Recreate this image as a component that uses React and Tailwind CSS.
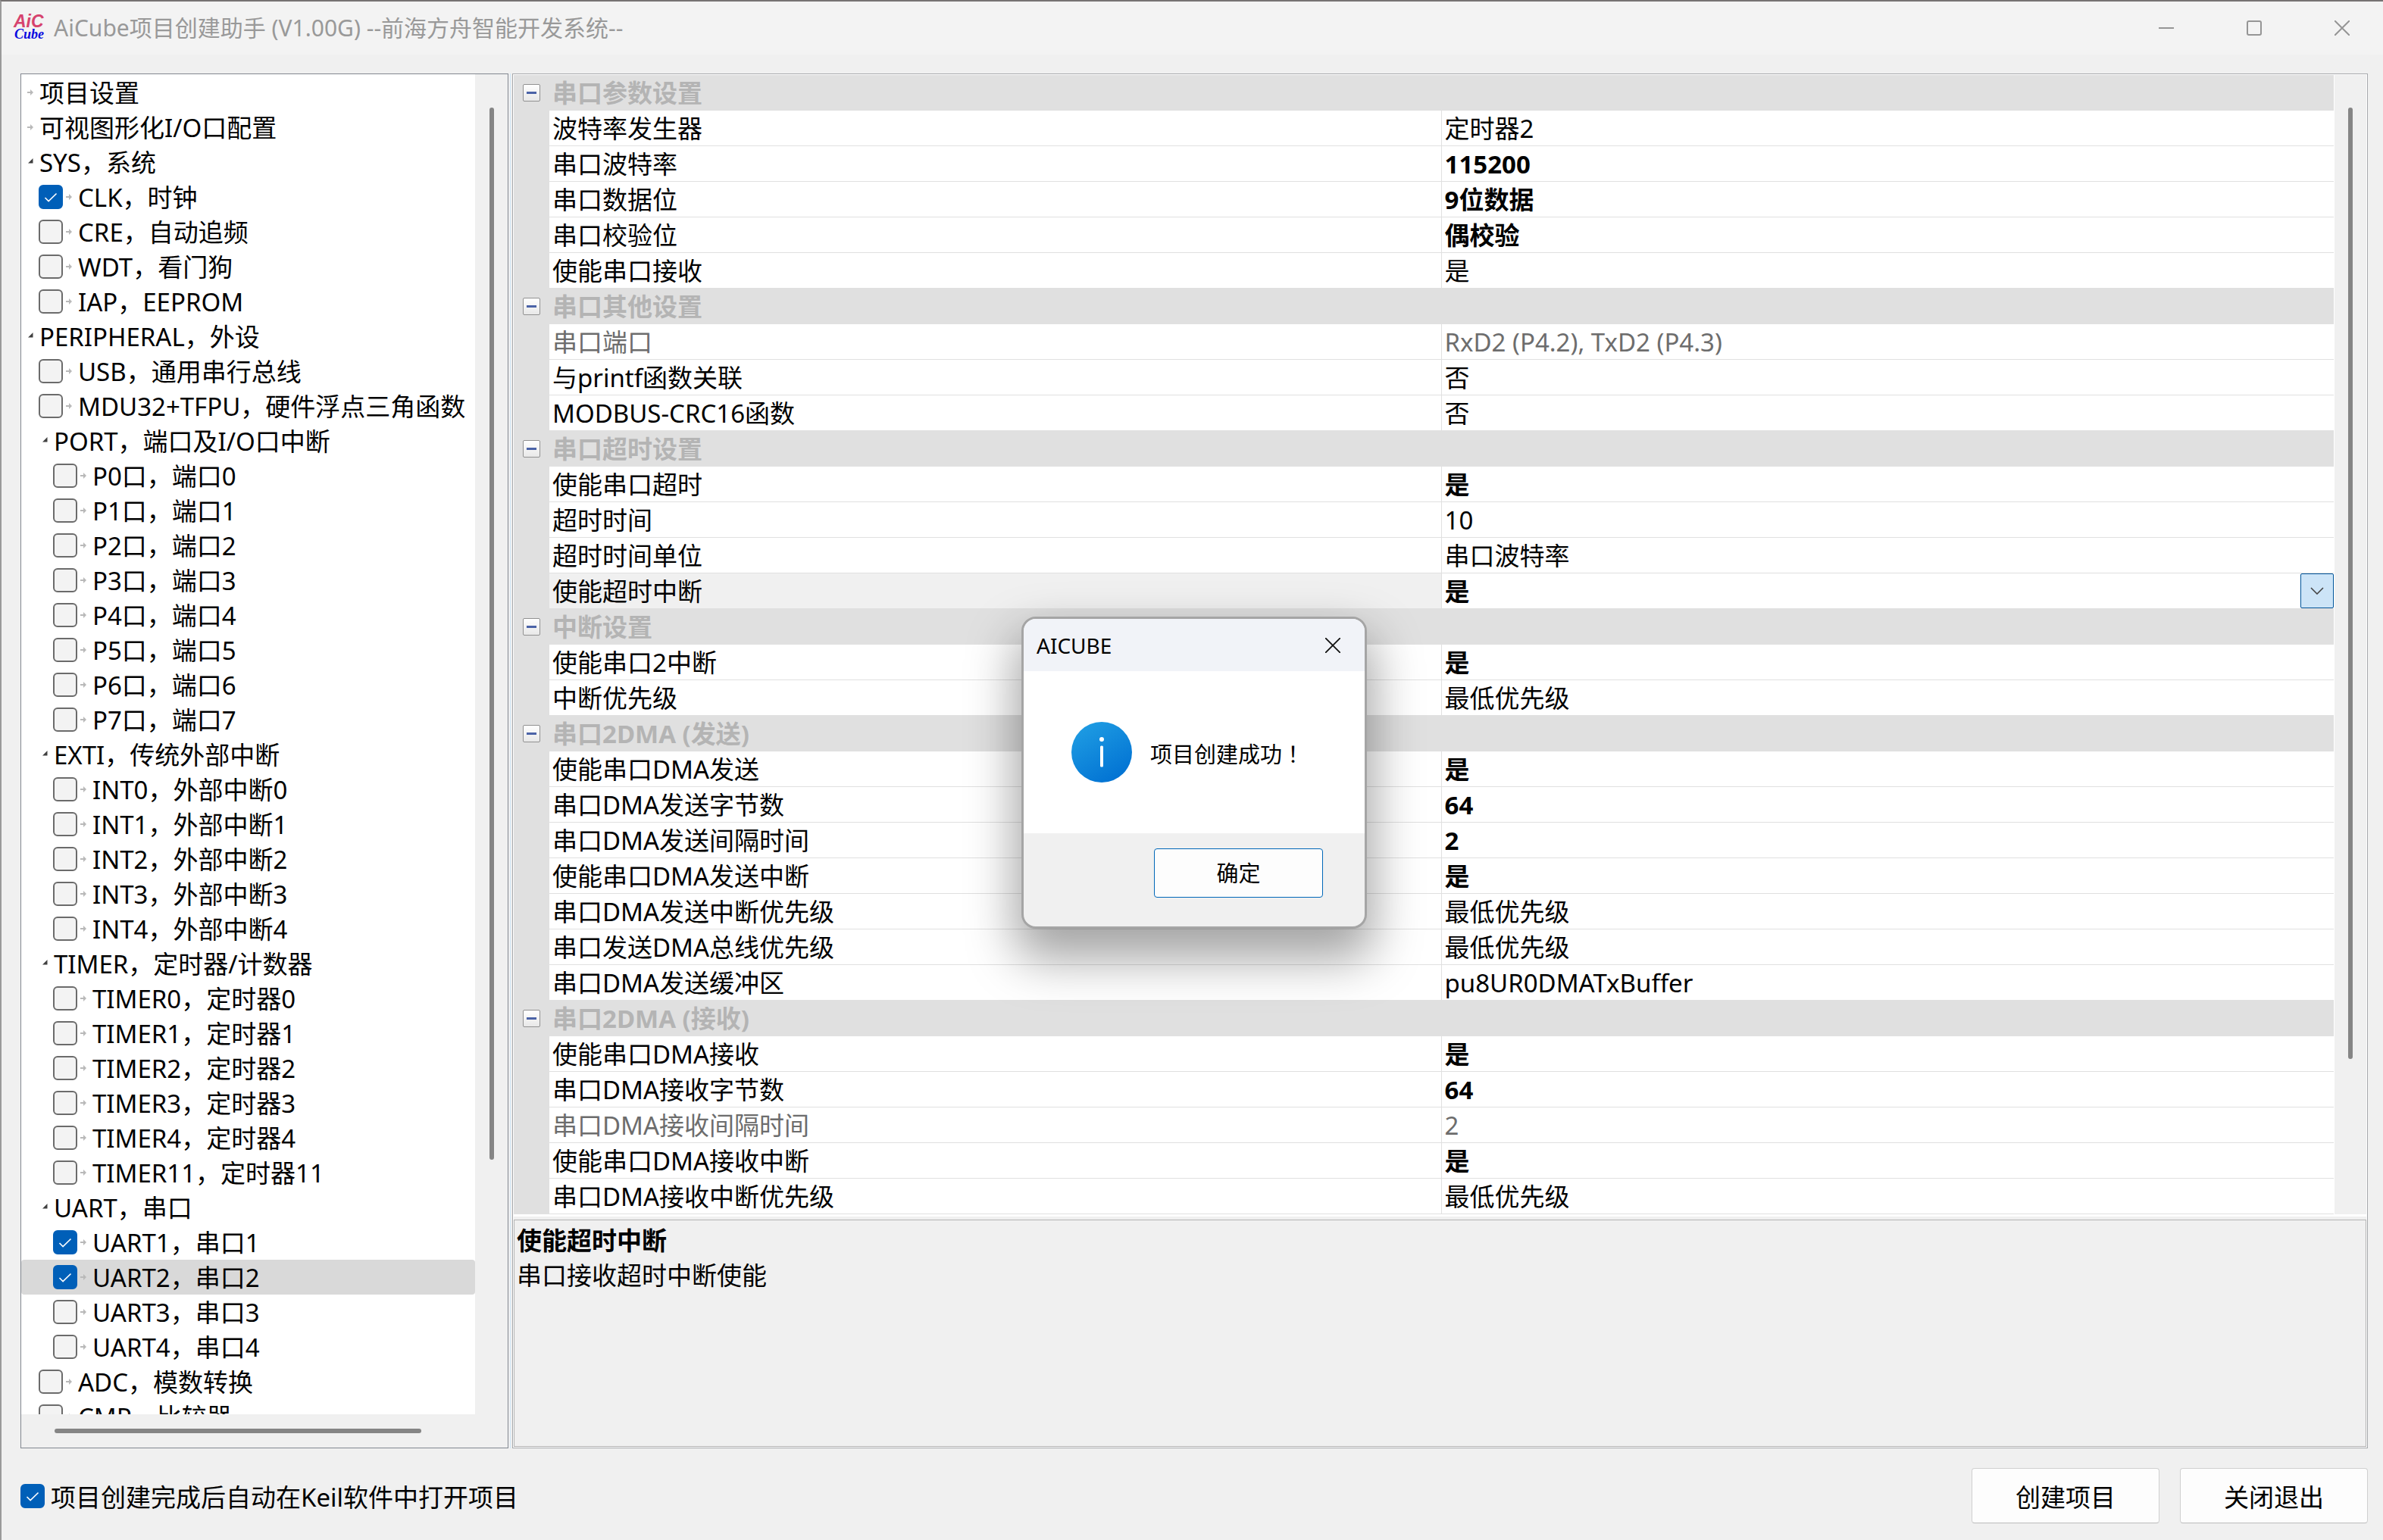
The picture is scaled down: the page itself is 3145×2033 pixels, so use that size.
import { useState } from 'react'

const treeItems = [
  { label: '项目设置', level: 0, leaf: true },
  { label: '可视图形化I/O口配置', level: 0, leaf: true },
  { label: 'SYS，系统', level: 0 },
  { label: 'CLK，时钟', level: 0, check: true, on: true },
  { label: 'CRE，自动追频', level: 0, check: true },
  { label: 'WDT，看门狗', level: 0, check: true },
  { label: 'IAP，EEPROM', level: 0, check: true },
  { label: 'PERIPHERAL，外设', level: 0 },
  { label: 'USB，通用串行总线', level: 0, check: true },
  { label: 'MDU32+TFPU，硬件浮点三角函数', level: 0, check: true },
  { label: 'PORT，端口及I/O口中断', level: 1 },
  { label: 'P0口，端口0', level: 1, check: true },
  { label: 'P1口，端口1', level: 1, check: true },
  { label: 'P2口，端口2', level: 1, check: true },
  { label: 'P3口，端口3', level: 1, check: true },
  { label: 'P4口，端口4', level: 1, check: true },
  { label: 'P5口，端口5', level: 1, check: true },
  { label: 'P6口，端口6', level: 1, check: true },
  { label: 'P7口，端口7', level: 1, check: true },
  { label: 'EXTI，传统外部中断', level: 1 },
  { label: 'INT0，外部中断0', level: 1, check: true },
  { label: 'INT1，外部中断1', level: 1, check: true },
  { label: 'INT2，外部中断2', level: 1, check: true },
  { label: 'INT3，外部中断3', level: 1, check: true },
  { label: 'INT4，外部中断4', level: 1, check: true },
  { label: 'TIMER，定时器/计数器', level: 1 },
  { label: 'TIMER0，定时器0', level: 1, check: true },
  { label: 'TIMER1，定时器1', level: 1, check: true },
  { label: 'TIMER2，定时器2', level: 1, check: true },
  { label: 'TIMER3，定时器3', level: 1, check: true },
  { label: 'TIMER4，定时器4', level: 1, check: true },
  { label: 'TIMER11，定时器11', level: 1, check: true },
  { label: 'UART，串口', level: 1 },
  { label: 'UART1，串口1', level: 1, check: true, on: true },
  { label: 'UART2，串口2', level: 1, check: true, on: true },
  { label: 'UART3，串口3', level: 1, check: true },
  { label: 'UART4，串口4', level: 1, check: true },
  { label: 'ADC，模数转换', level: 0, check: true },
  { label: 'CMP，比较器', level: 0, check: true },
]

const groups = [
  {
    title: '串口参数设置',
    rows: [
      { name: '波特率发生器', value: '定时器2' },
      { name: '串口波特率', value: '115200', changed: true },
      { name: '串口数据位', value: '9位数据', changed: true },
      { name: '串口校验位', value: '偶校验', changed: true },
      { name: '使能串口接收', value: '是' },
    ],
  },
  {
    title: '串口其他设置',
    rows: [
      { name: '串口端口', value: 'RxD2 (P4.2), TxD2 (P4.3)', disabled: true },
      { name: '与printf函数关联', value: '否' },
      { name: 'MODBUS-CRC16函数', value: '否' },
    ],
  },
  {
    title: '串口超时设置',
    rows: [
      { name: '使能串口超时', value: '是', changed: true },
      { name: '超时时间', value: '10' },
      { name: '超时时间单位', value: '串口波特率' },
      { name: '使能超时中断', value: '是', changed: true },
    ],
  },
  {
    title: '中断设置',
    rows: [
      { name: '使能串口2中断', value: '是', changed: true },
      { name: '中断优先级', value: '最低优先级' },
    ],
  },
  {
    title: '串口2DMA (发送)',
    rows: [
      { name: '使能串口DMA发送', value: '是', changed: true },
      { name: '串口DMA发送字节数', value: '64', changed: true },
      { name: '串口DMA发送间隔时间', value: '2', changed: true },
      { name: '使能串口DMA发送中断', value: '是', changed: true },
      { name: '串口DMA发送中断优先级', value: '最低优先级' },
      { name: '串口发送DMA总线优先级', value: '最低优先级' },
      { name: '串口DMA发送缓冲区', value: 'pu8UR0DMATxBuffer' },
    ],
  },
  {
    title: '串口2DMA (接收)',
    rows: [
      { name: '使能串口DMA接收', value: '是', changed: true },
      { name: '串口DMA接收字节数', value: '64', changed: true },
      { name: '串口DMA接收间隔时间', value: '2', disabled: true },
      { name: '使能串口DMA接收中断', value: '是', changed: true },
      { name: '串口DMA接收中断优先级', value: '最低优先级' },
    ],
  },
]

function CheckBox({ id, checked, onChange }) {
  return (
    <span className="relative block size-8 shrink-0">
      <input
        id={id}
        type="checkbox"
        checked={checked}
        onChange={onChange}
        className="block size-8 appearance-none rounded-md border-2 border-[#6b6b6b] bg-[#f3f3f3] checked:border-[#005fb8] checked:bg-[#005fb8]"
      />
      {checked && (
        <svg viewBox="0 0 32 32" className="pointer-events-none absolute inset-0 size-8" fill="none" stroke="#fff" strokeWidth="1.6">
          <path d="M8.5 17l4.6 4.6L23.5 11.5" />
        </svg>
      )}
    </span>
  )
}

function LeafArrow() {
  return (
    <svg viewBox="0 0 8 8" className="size-2 shrink-0" fill="#b9b9b9">
      <path d="M0 3h4V0l4 4-4 4V5H0z" />
    </svg>
  )
}

function OpenArrow() {
  return (
    <svg viewBox="0 0 8 16" className="h-4 w-2 shrink-0" fill="#404040">
      <path d="M7.5 3v6.5H1z" />
    </svg>
  )
}

function TreeRow({ item, index, checked, selected, onToggle, onSelect }) {
  const id = `tree-${index}`
  return (
    <li
      onClick={onSelect}
      className={`flex h-[46px] items-center ${item.level ? 'pl-[19px]' : ''} ${selected ? 'rounded-sm bg-[#d9d9d9]' : ''}`}
    >
      {item.check ? (
        <div className="flex items-center gap-1 pl-[23px]">
          <CheckBox id={id} checked={checked} onChange={onToggle} />
          <LeafArrow />
          <label htmlFor={id} className="pt-0.5 pl-1 whitespace-nowrap">{item.label}</label>
        </div>
      ) : (
        <div className="flex items-center gap-2 pl-2">
          {item.leaf ? <LeafArrow /> : <OpenArrow />}
          <span className="pt-0.5 whitespace-nowrap">{item.label}</span>
        </div>
      )}
    </li>
  )
}

function TreePanel() {
  const [checks, setChecks] = useState(treeItems.map((t) => !!t.on))
  const [selected, setSelected] = useState(34)

  const toggle = (i) => setChecks(checks.map((c, n) => (n === i ? !c : c)))

  return (
    <nav className="flex w-[644px] shrink-0 flex-col border border-[#828790] bg-[#f0f0f0]">
      <div className="flex min-h-0 flex-1">
        <ul className="min-h-0 w-[599px] overflow-hidden bg-white pt-px">
          {treeItems.map((item, i) => (
            <TreeRow
              key={item.label}
              item={item}
              index={i}
              checked={checks[i]}
              selected={selected === i}
              onToggle={() => toggle(i)}
              onSelect={() => setSelected(i)}
            />
          ))}
        </ul>
        <div className="flex flex-1 justify-center pt-11">
          <div className="h-[80.5%] w-1.5 rounded-full bg-[#858585]" />
        </div>
      </div>
      <div className="flex h-11 items-center pl-11">
        <div className="h-1.5 w-[81%] rounded-full bg-[#858585]" />
      </div>
    </nav>
  )
}

function GroupRows({ group, open, onToggle, active, onSelect }) {
  return (
    <tbody>
      <tr className="h-[47px] bg-[#e0e0e0]">
        <td className="p-0">
          <button
            type="button"
            onClick={onToggle}
            aria-label={group.title}
            className="ml-3 flex size-[23px] items-center justify-center rounded-xs border border-[#919191] bg-linear-to-b from-white to-[#e8e8e8]"
          >
            <span className="h-[3px] w-[13px] bg-[#4b63a7]" />
          </button>
        </td>
        <th colSpan={2} className="p-0 pl-1 text-left font-bold text-[#b4b4b4]">{group.title}</th>
      </tr>
      {open && group.rows.map((row) => {
        const isActive = active === row.name
        return (
          <tr key={row.name} onClick={() => onSelect(row.name)} className={`h-[47px] ${row.disabled ? 'text-[#6d6d6d]' : ''}`}>
            <td className="bg-[#e0e0e0] p-0" />
            <td className={`border-r border-b border-[#e0e0e0] p-0 pl-1 ${isActive ? 'bg-[#f0f0f0]' : 'bg-white'}`}>
              <div className="h-[46px] pt-px">{row.name}</div>
            </td>
            <td className={`border-b border-[#e0e0e0] bg-white p-0 pl-1 ${row.changed ? 'font-bold' : ''}`}>
              <div className="flex h-[46px] items-center justify-between">
                <span className="pt-0.5">{row.value}</span>
                {isActive && (
                  <button type="button" aria-label="展开" className="flex h-[46px] w-11 items-center justify-center rounded-xs border border-[#005499] bg-[#cce4f7]">
                    <svg viewBox="0 0 18 10" className="h-2.5 w-[18px]" fill="none" stroke="#444" strokeWidth="1.6">
                      <path d="M1 1l8 8 8-8" />
                    </svg>
                  </button>
                )}
              </div>
            </td>
          </tr>
        )
      })}
    </tbody>
  )
}

function PropertyPanel() {
  const [closed, setClosed] = useState([])
  const [active, setActive] = useState('使能超时中断')

  const toggle = (title) =>
    setClosed(closed.includes(title) ? closed.filter((t) => t !== title) : [...closed, title])

  return (
    <section className="flex min-w-0 flex-1 flex-col border border-[#a6a8ab] bg-white p-px">
      <div className="flex gap-px bg-white pb-[3px]">
        <div className="min-w-0 flex-1">
          <table className="w-full table-fixed border-separate border-spacing-0">
            <colgroup>
              <col className="w-[47px]" />
              <col />
              <col />
            </colgroup>
            {groups.map((g) => (
              <GroupRows
                key={g.title}
                group={g}
                open={!closed.includes(g.title)}
                onToggle={() => toggle(g.title)}
                active={active}
                onSelect={setActive}
              />
            ))}
          </table>
        </div>
        <div className="flex w-[42px] shrink-0 justify-center bg-[#f0f0f0] pt-[43px]">
          <div className="h-[86%] w-1.5 rounded-full bg-[#858585]" />
        </div>
      </div>
      <div className="flex min-h-0 flex-1 flex-col bg-[#f0f0f0] pt-1">
        <div className="min-h-0 flex-1 border border-[#b4b4b4] pt-1 pl-[3px]">
          <h2 className="font-bold">使能超时中断</h2>
          <p>串口接收超时中断使能</p>
        </div>
      </div>
    </section>
  )
}

function MessageDialog({ onClose }) {
  return (
    <div
      role="dialog"
      aria-label="AICUBE"
      className="absolute top-[812px] left-[1346px] w-[456px] overflow-hidden rounded-[19px] border-3 border-[#a5a5a5] bg-[#f0f0f0] bg-clip-padding text-[29px] shadow-[0_32px_64px_8px_rgba(0,0,0,0.36)]"
    >
      <div className="flex h-[69px] items-center justify-between bg-[#f1f3f8] pr-8 pl-[17px]">
        <span className="text-[28px]">AICUBE</span>
        <button type="button" aria-label="关闭" onClick={onClose}>
          <svg viewBox="0 0 20 20" className="size-5" fill="none" stroke="#111" strokeWidth="1.8">
            <path d="M0 0l20 20M20 0L0 20" />
          </svg>
        </button>
      </div>
      <div className="flex h-[214px] items-center gap-6 bg-white pl-[63px]">
        <svg viewBox="0 0 80 80" className="size-20 shrink-0">
          <defs>
            <linearGradient id="info" x1="0.2" y1="0" x2="0.8" y2="1">
              <stop offset="0" stopColor="#1f9de3" />
              <stop offset="1" stopColor="#0070d2" />
            </linearGradient>
          </defs>
          <circle cx="40" cy="40" r="40" fill="url(#info)" />
          <circle cx="40" cy="23" r="3" fill="#fff" />
          <rect x="38" y="31.5" width="4" height="28" rx="1.5" fill="#fff" />
        </svg>
        <p className="pt-1">
          项目创建成功<span lang="zh-TW" className="font-['Noto_Sans_CJK_TC',sans-serif]">！</span>
        </p>
      </div>
      <div className="flex h-[123px] items-start justify-end pt-5 pr-[55px]">
        <button type="button" onClick={onClose} className="h-[65px] w-[223px] rounded-sm border border-[#0067b8] bg-[#fdfdfd]">
          确定
        </button>
      </div>
    </div>
  )
}

function TitleBar() {
  return (
    <header className="flex h-[70px] items-center justify-between bg-[#f3f3f3] pr-11 pl-[15px] text-[30px] text-[#999]">
      <div className="flex items-center gap-2">
        <svg viewBox="0 -4 46 48" className="h-12 w-[46px] overflow-visible" fontStyle="italic" fontWeight="bold">
          <text x="1" y="19" fontSize="23" fontFamily="'Liberation Sans', sans-serif" fill="#d6436e">AiC</text>
          <text x="2" y="34" fontSize="18" fontFamily="'Liberation Serif', serif" fill="#0a0ae0">Cube</text>
        </svg>
        <h1>AiCube项目创建助手 (V1.00G) --前海方舟智能开发系统--</h1>
      </div>
      <div className="flex items-center gap-24">
        <button type="button" aria-label="最小化">
          <svg viewBox="0 0 20 20" className="size-5" stroke="#959595" strokeWidth="2"><path d="M0 10h20" /></svg>
        </button>
        <button type="button" aria-label="最大化">
          <svg viewBox="0 0 20 20" className="size-5" fill="none" stroke="#959595" strokeWidth="2"><rect x="1" y="1" width="18" height="18" rx="2" /></svg>
        </button>
        <button type="button" aria-label="关闭">
          <svg viewBox="0 0 20 20" className="size-5" fill="none" stroke="#959595" strokeWidth="2"><path d="M0 0l20 20M20 0L0 20" /></svg>
        </button>
      </div>
    </header>
  )
}

export default function App() {
  const [openKeil, setOpenKeil] = useState(true)
  const [dialog, setDialog] = useState(true)

  return (
    <div
      lang="zh-CN"
      className="relative flex h-screen flex-col overflow-hidden border-t-2 border-l-2 border-t-[#767272] border-l-[#9a9a9a] bg-[#f0f0f0] font-['Noto_Sans','Noto_Sans_CJK_SC',sans-serif] text-[33px] leading-[46px] text-black"
    >
      <TitleBar />
      <main className="flex min-h-0 flex-1 pt-[25px] pr-5 pl-[25px]">
        <TreePanel />
        <div className="mx-0.5 w-px bg-[#cfe6f5]" />
        <PropertyPanel />
      </main>
      <footer className="flex h-[121px] shrink-0 items-center justify-between pt-1 pr-5 pl-[25px]">
        <div className="flex items-center gap-2">
          <CheckBox id="open-keil" checked={openKeil} onChange={() => setOpenKeil(!openKeil)} />
          <label htmlFor="open-keil" className="pt-1">项目创建完成后自动在Keil软件中打开项目</label>
        </div>
        <div className="flex gap-[27px]">
          <button type="button" onClick={() => setDialog(true)} className="h-[73px] w-[248px] rounded-sm border border-[#d0d0d0] border-b-[#bbb] bg-[#fdfdfd] pt-1">创建项目</button>
          <button type="button" className="h-[73px] w-[248px] rounded-sm border border-[#d0d0d0] border-b-[#bbb] bg-[#fdfdfd] pt-1">关闭退出</button>
        </div>
      </footer>
      {dialog && <MessageDialog onClose={() => setDialog(false)} />}
    </div>
  )
}
